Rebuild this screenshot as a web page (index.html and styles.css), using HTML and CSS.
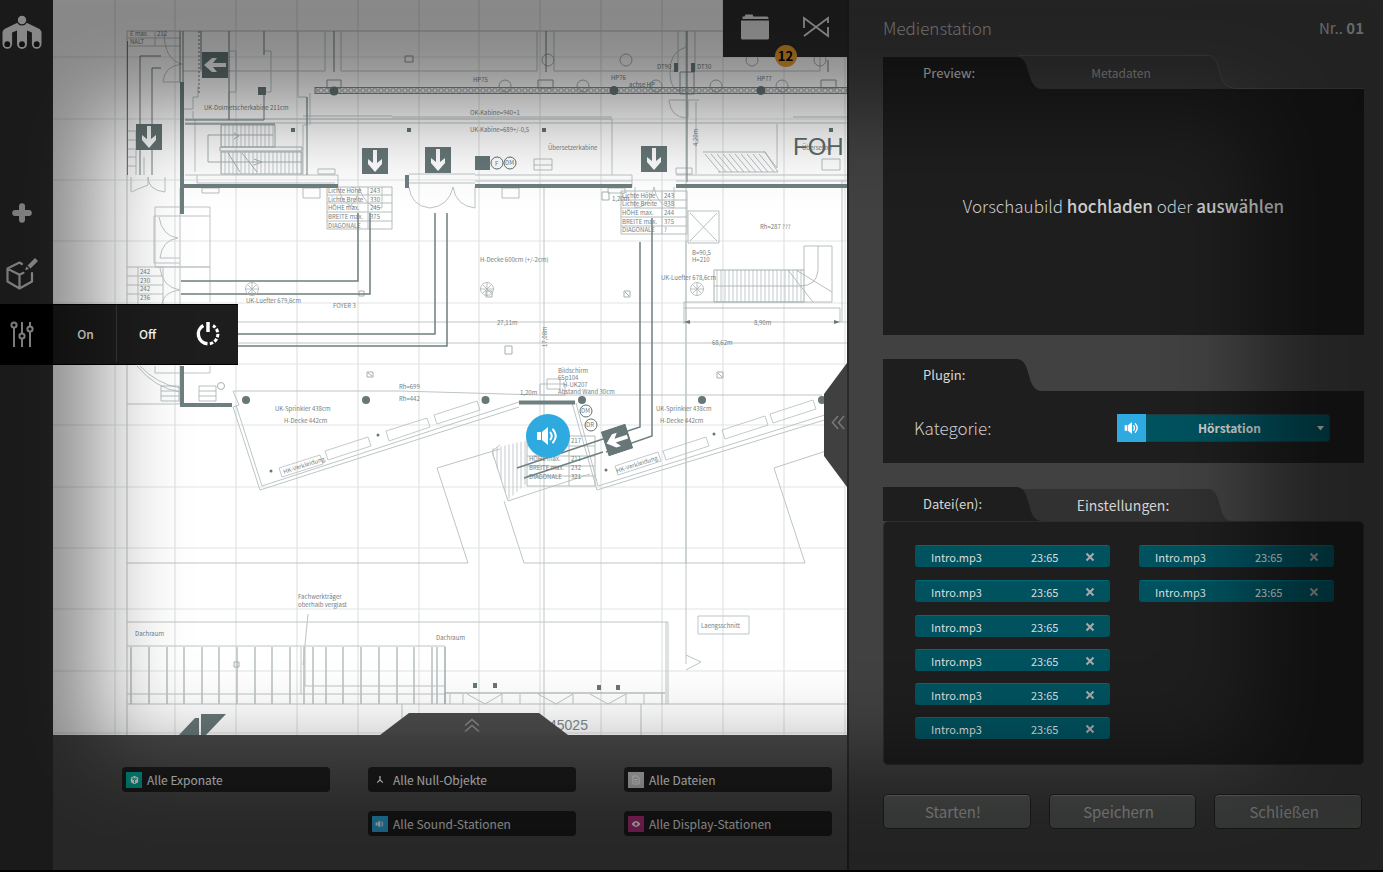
FILE: index.html
```html
<!DOCTYPE html>
<html lang="de">
<head>
<meta charset="utf-8">
<title>Medienstation</title>
<link rel="stylesheet" href="styles.css">
</head>
<body>
<svg class="defs" width="0" height="0" aria-hidden="true">
  <defs>
    <symbol id="speaker" viewBox="0 0 24 20">
      <path d="M1 6h4v8H1zM6 6l6-5v18l-6-5z" fill="currentColor"/>
      <path d="M14.500 6.500q2.500 3.500 0 7M17 3.500q5.500 6.500 0 13" fill="none" stroke="currentColor" stroke-width="2" stroke-linecap="round"/>
    </symbol>
    <symbol id="arrow-sign" viewBox="0 0 26 26">
      <path d="M0 0h26v26H0z" fill="#677777"/>
      <path d="M11 2h4v13l5-4v5l-7 8-7-8v-5l5 4z" fill="#fff"/>
    </symbol>
    <symbol id="fan" viewBox="0 0 14 14">
      <path d="M7 .5a6.500 6.500 0 1 0 .01 0M7 0v14M0 7h14M2.500 2.500l9 9M11.500 2.500l-9 9" fill="none" stroke="#a9b2b2" stroke-width=".8"/>
    </symbol>
    <symbol id="cross" viewBox="0 0 10 10"><path d="M1.500 1.500l7 7M8.500 1.500l-7 7" stroke="currentColor" stroke-width="2"/></symbol>
    <pattern id="truss" width="6" height="6" patternUnits="userSpaceOnUse" y="87.500"><circle cx="3" cy="3" r="2.300" fill="none" stroke="#7f8b8b" stroke-width=".9"/></pattern>
    <pattern id="hatch" width="4" height="6" patternUnits="userSpaceOnUse"><path d="M1 0v6" stroke="#b4bcbc" stroke-width=".8"/></pattern>
  </defs>
</svg>

<div class="app">
  <nav class="rail" aria-label="Werkzeuge">
    <a class="rail-logo" href="#" aria-label="Start">
      <svg width="40" height="35" viewBox="0 0 40 35"><path d="M20 5.500L3.500 13.500Q.5 15 .5 18V29a4.800 4.800 0 0 0 9.600 0V17.500l4.900-2V29a5 5 0 0 0 10 0V15.500l4.900 2V29a4.800 4.800 0 0 0 9.600 0V18q0-3-3-4.500z" fill="currentColor"/><circle cx="20" cy="5" r="4.900" fill="currentColor" stroke="#313131" stroke-width="1.300"/><g fill="#222"><circle cx="5.300" cy="29.200" r="2.900"/><circle cx="20" cy="29.200" r="2.900"/><circle cx="34.700" cy="29.200" r="2.900"/></g></svg>
    </a>
    <button class="rail-button" type="button" aria-label="Hinzufügen"><svg width="20" height="20" viewBox="0 0 20 20"><path d="M10 3.200v13.600M3.200 10h13.600" stroke="currentColor" stroke-width="6" stroke-linecap="round"/></svg></button>
    <button class="rail-button" type="button" aria-label="Objekt bearbeiten"><svg width="34" height="36" viewBox="0 0 34 36" fill="none" stroke="currentColor" stroke-width="2.200" stroke-linejoin="round" stroke-linecap="round"><path d="M17 8L14.500 6.500 2.500 12.500v13L14.500 32.500l12.500-7V17M3 13L14.500 18.800V32M14.500 18.800l4-2"/><path d="M22.500 9.500L30 2l3 3-7.500 7.500zM21.500 10.500l-1.500 3.800 4-1.300z" fill="currentColor" stroke="none"/></svg></button>
    <div class="rail-group">
      <button class="rail-button rail-button-active" type="button" aria-label="Regler"><svg width="24" height="28" viewBox="0 0 24 28" fill="none" stroke="currentColor" stroke-width="2"><circle cx="4" cy="4" r="2.600"/><circle cx="12" cy="15" r="2.600"/><circle cx="20" cy="8" r="2.600"/><path d="M4 6.600V26M12 1v11.400M12 17.600V26M20 1v4.400M20 10.600V26"/></svg></button>
      <div class="flyout">
        <button type="button">On</button>
        <button type="button">Off</button>
        <button type="button" aria-label="Neustart"><svg width="26" height="26" viewBox="0 0 26 26" fill="none" stroke="currentColor" stroke-width="3"><path d="M13 1v10" stroke-width="3.500"/><path d="M8.300 4.500A9.800 9.800 0 0 0 12.500 22.800" stroke-width="3.400"/><path d="M14.800 22.700A9.800 9.800 0 0 0 18 4.600" stroke-dasharray="3.500 1.600"/></svg></button>
      </div>
    </div>
  </nav>

  <main class="stage">
    <section class="map" aria-label="Grundriss">
      <svg class="plan" viewBox="53 0 794 735" preserveAspectRatio="xMinYMin slice">
        <path d="M53 57H847M53 119H847M53 180H847M53 241H847M53 303H847M53 364H847M53 425H847M53 487H847M53 548H847M53 609H847M53 671H847M53 733H847M115 0V735M175 0V735M236 0V735M297 0V735M358 0V735M419 0V735M479 0V735M540 0V735M601 0V735M662 0V735M723 0V735M784 0V735M845 0V735" stroke="#e2e4e4" stroke-width="1.200"/>
        <g fill="none" stroke="#bdc5c5" stroke-width="1">
          <path d="M127 31H847M127 31V735M127 38H180M127 46H180M155 31V46M183 71H325V31M341 31V71H537V31M554 31V71H678V31M695 31V71H820V31M298 31V97H307V125H303V175M310 93V125M230 51H236V92H229V120M264 51H271V92H264M127 131H136V175M127 140H136M127 149H136M127 157H136M127 166H136M144 157V175"/>
          <path d="M185 119H612V175M185 123H847M392 117H612M303 116H392M185 175H338V187M197 175V183H335M195 125V172M195 119V125M193 111V119M193 97V109H183M198 86V97H193M475 175H632V187M475 181H632M409 174H475M409 183H475M676 175H847M676 181H847M793 117H847M777 124V168L764 151M699 100H688V118M696 102V174"/>
          <path d="M164 31Q164 60 182 64Q164 66 163 82H180M131 192V177M148 177V185Q135 190 132 192M148 177Q148 190 165 192V177M338 187Q342 205 355 207M359 187Q365 208 382 208V187M360 187Q356 206 346 207M409 187Q411 206 430 208Q449 206 453 187Q456 206 475 208V187M654 187Q650 207 635 208V187M654 187Q657 207 674 208V187M686 47Q669 52 670 73T684 90M686 100H669V101Q671 117 686 118"/>
          <path d="M155 207H210V267H155V207M154 216H210M154 216V263H180M159 217Q162 236 178 238Q162 240 160 258H180M155 267H210V302M127 267H163V304M127 276H163M127 285H163M127 294H163M138 267V304M160 268Q162 287 180 290Q163 292 162 304M137 366Q155 388 180 392M140 366Q157 384 180 388M155 366V373H210V366M180 188V404M127 404H180"/>
          <path d="M233 407L260 490L519 407M236 405L262 486L519 402M233 391H400L540 395H822M233 391L239 405L233 407M238 322H847M238 343H847M544 188V735M686 31V564M686 240V664M842 180V322M127 563H468L437 468L500 449M572 403L597 490L847 413M576 403L598 486L847 408M500 445L492 451L508 501L590 474M504 501L524 563H805L774 468L826 451"/>
          <path d="M127 622H668V704M666 622V704M127 646H445V704M127 694H445V704M127 704H847M301 647V694M305 647V686H445M308 614L303 665M402 704V735M641 704V735M698 616H749V634H698ZM686 655L701 662L686 670"/>
          <path d="M131 647V704M149 647V704M167 647V704M184 647V704M202 647V704M219 647V704M237 647V704M255 647V704M272 647V704M290 647V704M304 647V704M313 647V704M326 647V704M343 647V704M361 647V704M379 647V704M397 647V704M414 647V704M432 647V704M437 647V704" stroke="#bcc4c4" stroke-width="1.600"/>
          <path d="M450 694V704M463 694V704M467 694L485 704L502 694V704M520 694V704M538 694L556 704L573 694V704M590 694L608 704L626 694V704M644 694V704M662 694V704"/>
        </g>
        <g fill="url(#hatch)" stroke="#a5afaf">
          <path d="M221 125H275V147H221ZM221 152H302V174H221Z"/>
          <path d="M714 270H804V302H714Z"/>
          <path d="M490 449L528 440V482L508 500Z" stroke="none"/>
        </g>
        <g fill="none" stroke="#a5afaf">
          <path d="M220 147H302V151H220ZM208 135H273M208 135V162H302M228 153L240 172M242 153L257 172M234 133L239 136L234 139M254 159L262 162L254 165"/>
          <path d="M684 302H832V246H804V270M818 246V270Q817 286 800 286H714M788 270L813 302M796 270L832 292M684 308H840V322M684 308V324M684 302V308M688 211H719V243H688ZM690 213L717 241M717 213L690 241M703 152H765L778 172H718M705 154L720 172M711 154L726 172M717 154L732 172M723 154L738 172M729 154L744 172M735 154L750 172M741 154L756 172M747 154L762 172M753 154L768 172M759 154L774 172" stroke-width=".8"/>
          <path d="M327 187H392V229H327ZM327 195H392M327 203H392M327 212H392M327 221H392M368 187V229M621 191H687V234H621ZM621 200H687M621 208H687M621 217H687M621 226H687M662 191V234M527 436H595V486H527ZM527 446H595M527 456H595M527 466H595M527 476H595M569 436V486" stroke="#b4bcbc"/>
          <path d="M279 468L320 455L323 464L282 477ZM325 451L368 437L371 446L328 460ZM386 431L427 418L430 427L389 441ZM434 415L477 401L480 410L437 424ZM615 466L658 452L661 461L618 475ZM663 451L706 437L709 446L666 460ZM722 430L765 416L768 425L725 439ZM770 414L813 400L816 409L773 423Z" stroke="#b4bcbc" stroke-width=".8"/>
          <path d="M202 188H219V193H202ZM303 188H320V198H303ZM318 169H335V174H318ZM502 188H519V198H502ZM534 159H552V170H534ZM534 165H552M822 159H840V170H822ZM676 168H692V174H676ZM608 188H625V193H608ZM161 386H179V401H161ZM161 391H179M161 396H179M199 386H216V401H199ZM199 391H216M199 396H216M540 384H565V395H540ZM547 379H560V389H547Z" stroke-width=".8"/>
          <path d="M327 80H341V88H327ZM405 56H413V62H405ZM538 80H553V88H538ZM821 80H836V88H821ZM680 72H694V94H680Z" stroke="#8f9a9a"/>
          <circle cx="626" cy="60" r="6"/><circle cx="548" cy="60" r="6"/><circle cx="505" cy="86" r="6"/><circle cx="583" cy="86" r="6"/><circle cx="656" cy="86" r="6"/><circle cx="716" cy="86" r="6"/><circle cx="782" cy="86" r="6"/><circle cx="752" cy="60" r="6"/><circle cx="820" cy="60" r="6"/>
          <path d="M367 372h6v5h-6zM368 373l4 3M624 291h6v6h-6zM625 292l4 4M505 346h7v8h-7zM717 372h6v6h-6zM718 373l4 4M234 662h5v5h-5zM359 291h5v5h-5zM486 291h6v6h-6zM602 192h7v8h-7z"/>
          <circle cx="221" cy="386" r="3.500"/>
        </g>
        <rect x="315" y="87.500" width="532" height="6" fill="url(#truss)" stroke="#7f8b8b"/>
        <g stroke="#6f7f7f" fill="none">
          <path d="M127.500 41V175M180 31V82M183 31V82M140 175V56H161M152 175V68H161M201 31V70M229 31V120M264 31V55M264 92V120M185 120H264M334 31V72M546 31V72M687 31V182M828 60V72M185 124H275M307 97V175" stroke-width="1"/>
          <path d="M199 31V95" stroke-dasharray="2 2"/>
          <path d="M358 213V281H181M370 213V294H181M435 213V334H238M447 213V346H238M640 242V427L600 440M652 218V436L606 452M517 468L600 440M524 478L603 452" stroke-width="1.500"/>
          <path d="M182 82V214M182 366V405" stroke-width="4"/><path d="M180 405H232" stroke-width="4"/>
          <path d="M184 186H338M475 186H632M676 186H847M519 402.500H575" stroke-width="4"/>
          <path d="M407 175V188M676 63V72M693 63V72" stroke-width="4"/>
          <path d="M445 647V704M445 693H665" stroke="#96a2a2"/>
        </g>
        <g fill="#677777">
          <circle cx="334" cy="91" r="4.500"/><circle cx="614" cy="90.500" r="4.500"/><circle cx="761" cy="90.500" r="4.500"/><circle cx="246" cy="400" r="4"/><circle cx="366" cy="400" r="4"/><circle cx="485.500" cy="400" r="4"/><circle cx="582" cy="400" r="4"/><circle cx="702" cy="400" r="4"/><circle cx="822" cy="400" r="4"/>
          <circle cx="271" cy="471" r="1.500"/><circle cx="378" cy="435" r="1.500"/><circle cx="606" cy="470" r="1.500"/><circle cx="714" cy="434" r="1.500"/>
          <path d="M258 87h8v8h-8zM475 156h15v14h-15zM473 683h4v5h-4zM493 683h4v5h-4zM597 685h4v5h-4zM616 685h4v5h-4zM291 128h4v4h-4zM407 128h4v4h-4zM542 128h4v4h-4zM829 128h4v4h-4zM179 735L195 718H199V735ZM201 714H226L206 735H201ZM684 322l6-2v4zM840 322l-6-2v4z"/>
        </g>
        <use href="#arrow-sign" x="202" y="52" width="26" height="26" transform="rotate(90 215 65)"/>
        <use href="#arrow-sign" x="136" y="124" width="26" height="26"/>
        <use href="#arrow-sign" x="362" y="148" width="26" height="26"/>
        <use href="#arrow-sign" x="425" y="147" width="26" height="26"/>
        <use href="#arrow-sign" x="641" y="146" width="26" height="26"/>
        <use href="#arrow-sign" x="604" y="427" width="26" height="26" transform="rotate(72 617 440)"/>
        <use href="#fan" x="245" y="282" width="14" height="14"/><use href="#fan" x="480" y="282" width="14" height="14"/><use href="#fan" x="690" y="282" width="14" height="14"/>
        <g fill="#fff" fill-opacity=".6" stroke="#5f7070"><circle cx="497" cy="163" r="6"/><circle cx="510" cy="163" r="6"/><circle cx="586" cy="411" r="6"/><circle cx="591" cy="425" r="6"/></g>
        <g class="plan-text">
          <text x="130" y="36">E max.</text><text x="157" y="36">212</text><text x="130" y="44">NALT</text>
          <text x="204" y="110">UK-Dolmetscherkabine 211cm</text><text x="470" y="115">OK-Kabine=940+1</text><text x="470" y="132">UK-Kabine=689+/-0,5</text>
          <text x="548" y="150">Übersetzerkabine</text><text x="802" y="150">Übersetzer</text><text x="473" y="82">HP75</text><text x="611" y="80">HP76</text><text x="757" y="81">HP77</text><text x="629" y="87">achse HP</text><text x="657" y="69">DT90</text><text x="697" y="69">DT30</text>
          <text x="495" y="166">F</text><text x="505" y="165">DM</text><text x="581" y="413">DM</text><text x="586" y="427">DR</text>
          <text x="328" y="193">Lichte Höhe</text><text x="328" y="202">Lichte Breite</text><text x="328" y="210">HÖHE max.</text><text x="328" y="219">BREITE max.</text><text x="328" y="228">DIAGONALE</text><text x="370" y="193">243</text><text x="370" y="202">330</text><text x="370" y="210">245</text><text x="370" y="219">375</text>
          <text x="622" y="198">Lichte Höhe</text><text x="622" y="206">Lichte Breite</text><text x="622" y="215">HÖHE max.</text><text x="622" y="224">BREITE max.</text><text x="622" y="232">DIAGONALE</text><text x="664" y="198">243</text><text x="664" y="206">938</text><text x="664" y="215">244</text><text x="664" y="224">375</text><text x="664" y="232">?</text>
          <text x="612" y="201">1,20m</text><text x="760" y="229">Rh=287 ???</text><text x="480" y="262">H-Decke 600cm (+/-2cm)</text><text x="692" y="255">B=90,5</text><text x="692" y="262">H=210</text><text x="661" y="280">UK-Luefter 678,6cm</text>
          <text x="246" y="303">UK-Luefter 679,6cm</text><text x="333" y="308">FOYER 3</text><text x="497" y="325">27,11m</text><text x="754" y="325">8,90m</text><text x="712" y="345">68,62m</text><text x="547" y="347" transform="rotate(-90 547 347)">17,08m</text><text x="698" y="146" transform="rotate(-90 698 146)">4,20m</text>
          <text x="140" y="274">242</text><text x="140" y="283">230</text><text x="140" y="291">242</text><text x="140" y="300">236</text>
          <text x="399" y="389">Rh=699</text><text x="399" y="401">Rh=442</text><text x="275" y="411">UK-Sprinkler 438cm</text><text x="284" y="423">H-Decke 442cm</text><text x="656" y="411">UK-Sprinkler 438cm</text><text x="660" y="423">H-Decke 442cm</text>
          <text x="558" y="373">Bildschirm</text><text x="558" y="380">65p104</text><text x="563" y="387">H-UK207</text><text x="558" y="394">Abstand Wand 30cm</text><text x="520" y="395">1,20m</text>
          <text x="284" y="474" transform="rotate(-18 284 474)">HK-Verkleidung</text><text x="617" y="473" transform="rotate(-18 617 473)">HK-Verkleidung</text>
          <text x="529" y="461">HÖHE max.</text><text x="529" y="470">BREITE max.</text><text x="529" y="479">DIAGONALE</text><text x="571" y="443">217</text><text x="571" y="461">211</text><text x="571" y="470">232</text><text x="571" y="479">321</text>
          <text x="298" y="599">Fachwerkträger</text><text x="298" y="607">oberhalb verglast</text><text x="135" y="636">Dachraum</text><text x="436" y="640">Dachraum</text><text x="701" y="628">Laengsschnitt</text>
        </g>
        <text class="plan-foh" x="793" y="155">FOH</text>
        <text class="plan-number" x="549" y="730">45025</text>
      </svg>
      <button class="pin" type="button" aria-label="Sound-Station"><svg width="24" height="20"><use href="#speaker"/></svg></button>
      <div class="map-tools">
        <button type="button" aria-label="Ordner, 12 neue"><svg width="30" height="26" viewBox="0 0 30 26"><path d="M2.500 5V2.500h2L5.500.5h7l1 2H27q1.500 0 1.500 2V5zM1 6.500h28V24q0 1.500-1.500 1.500h-25Q1 25.500 1 24z" fill="currentColor"/></svg><span class="badge">12</span></button>
        <button type="button" aria-label="Verbindungen"><svg width="28" height="22" viewBox="0 0 28 22" fill="none" stroke="currentColor" stroke-width="1.800"><path d="M2 12V2l24 18V11M2 20L26 2V7M2 20"/></svg></button>
      </div>
      <button class="handle-right" type="button" aria-label="Panel öffnen"><svg width="14" height="15" viewBox="0 0 14 15" fill="none" stroke="currentColor" stroke-width="1.600"><path d="M7 1L1.500 7.500 7 14M13 1L7.500 7.500 13 14"/></svg></button>
      <button class="handle-bottom" type="button" aria-label="Leiste öffnen"><svg width="16" height="15" viewBox="0 0 16 15" fill="none" stroke="currentColor" stroke-width="1.600"><path d="M1 7.500L8 1.500l7 6M1 13.500l7-6 7 6"/></svg></button>
    </section>

    <section class="drawer" aria-label="Filter">
      <button class="filter" type="button"><span class="filter-icon icon-teal"><svg width="9" height="10" viewBox="0 0 11 11"><path d="M5.500.3L10 2.800v5.400l-4.500 2.500L1 8.200V2.800z" fill="currentColor"/><path d="M2.300 3.700l3.200 1.800 3.200-1.800M5.500 5.500v3.700M3.500 2.800l2 1 2-1" stroke="#008577" fill="none"/></svg></span>Alle Exponate</button>
      <button class="filter" type="button"><span class="filter-icon"><svg width="8" height="9" viewBox="0 0 10 11"><path d="M5 1v5L1.500 9.500M5 6l3.500 3.500" stroke="currentColor" stroke-width="1.500" fill="none"/></svg></span>Alle Null-Objekte</button>
      <button class="filter" type="button"><span class="filter-icon icon-grey"><svg width="8" height="10" viewBox="0 0 9 11" fill="none" stroke="currentColor"><path d="M1 1h4.500L8 3.500V10H1zM2.500 5h4M2.500 7.500h4"/></svg></span>Alle Dateien</button>
      <button class="filter filter-second" type="button"><span class="filter-icon icon-blue"><svg width="10" height="8"><use href="#speaker"/></svg></span>Alle Sound-Stationen</button>
      <button class="filter" type="button"><span class="filter-icon icon-pink"><svg width="10" height="8" viewBox="0 0 11 9"><path d="M.5 4.500Q5.500-2.500 10.500 4.500 5.500 11.500.5 4.500z" fill="currentColor"/><circle cx="5.500" cy="4.500" r="1.700" fill="#b5307c"/></svg></span>Alle Display-Stationen</button>
    </section>
  </main>

  <aside class="panel">
    <header class="panel-head"><h1>Medienstation</h1><p>Nr.. <b>01</b></p></header>

    <section class="group">
      <div class="tabs tabs-lined">
        <button class="tab" type="button"><svg class="tab-shape" viewBox="0 0 158 32" preserveAspectRatio="none"><path d="M0 0H133C143 0 144 11 146 16C148 26 152 32 159 32H0Z" fill="#1e1e1e"/></svg><span>Preview:</span></button>
        <button class="tab tab-back tab-tall" type="button"><svg class="tab-shape" viewBox="0 0 218 34" preserveAspectRatio="none"><path d="M0 1H190C199 1 200 12 202 18C204 28 209 33 217 34H0Z" fill="#3d3d3d"/><path d="M0 .5H190C199 .5 200 12 202 18C204 28 209 33 218 33.500" fill="none" stroke="#555"/></svg><span>Metadaten</span></button>
      </div>
      <div class="box preview"><p>Vorschaubild <a href="#">hochladen</a> oder <a href="#">auswählen</a></p></div>
    </section>

    <section class="group">
      <div class="tabs"><button class="tab" type="button"><svg class="tab-shape" viewBox="0 0 158 32" preserveAspectRatio="none"><path d="M0 0H133C143 0 144 11 146 16C148 26 152 32 159 32H0Z" fill="#1e1e1e"/></svg><span>Plugin:</span></button></div>
      <div class="box plugin">
        <label for="kategorie">Kategorie:</label>
        <div class="category">
          <span class="category-icon"><svg width="16" height="14"><use href="#speaker"/></svg></span>
          <select id="kategorie"><option>Hörstation</option></select>
          <svg class="category-arrow" width="7" height="5" viewBox="0 0 7 5"><path d="M0 0h7L3.500 4.500z" fill="currentColor"/></svg>
        </div>
      </div>
    </section>

    <section class="group">
      <div class="tabs">
        <button class="tab tab-tall" type="button"><svg class="tab-shape" viewBox="0 0 158 34" preserveAspectRatio="none"><path d="M0 0H133C143 0 144 12 146 17C148 28 152 34 159 34H0Z" fill="#1e1e1e"/></svg><span>Datei(en):</span></button>
        <button class="tab tab-back tab-bright" type="button"><svg class="tab-shape" viewBox="0 0 218 32" preserveAspectRatio="none"><path d="M0 0H190C199 0 200 11 202 16C204 26 207 32 214 32H0Z" fill="#313131"/></svg><span>Einstellungen:</span></button>
      </div>
      <div class="box files">
        <ul>
          <li><span>Intro.mp3</span><time>23:65</time><button type="button" aria-label="Entfernen"><svg width="10" height="10"><use href="#cross"/></svg></button></li>
          <li><span>Intro.mp3</span><time>23:65</time><button type="button" aria-label="Entfernen"><svg width="10" height="10"><use href="#cross"/></svg></button></li>
          <li><span>Intro.mp3</span><time>23:65</time><button type="button" aria-label="Entfernen"><svg width="10" height="10"><use href="#cross"/></svg></button></li>
          <li><span>Intro.mp3</span><time>23:65</time><button type="button" aria-label="Entfernen"><svg width="10" height="10"><use href="#cross"/></svg></button></li>
          <li><span>Intro.mp3</span><time>23:65</time><button type="button" aria-label="Entfernen"><svg width="10" height="10"><use href="#cross"/></svg></button></li>
          <li><span>Intro.mp3</span><time>23:65</time><button type="button" aria-label="Entfernen"><svg width="10" height="10"><use href="#cross"/></svg></button></li>
        </ul>
        <ul>
          <li><span>Intro.mp3</span><time>23:65</time><button type="button" aria-label="Entfernen"><svg width="10" height="10"><use href="#cross"/></svg></button></li>
          <li><span>Intro.mp3</span><time>23:65</time><button type="button" aria-label="Entfernen"><svg width="10" height="10"><use href="#cross"/></svg></button></li>
        </ul>
      </div>
    </section>

    <footer class="actions"><button type="button">Starten!</button><button type="button">Speichern</button><button type="button">Schließen</button></footer>
  </aside>
</div>
</body>
</html>
```

FILE: styles.css
```css
* { box-sizing: border-box; }

body {
  margin: 0;
  background: #000;
  color: #ccc;
  font: 14px/20px "Noto Sans CJK SC", "Noto Sans", sans-serif;
}

h1, p, ul { margin: 0; padding: 0; font-weight: inherit; }
ul { list-style: none; }
svg { display: block; flex: none; }
button { margin: 0; padding: 0; border: 0; background: none; color: inherit; font: inherit; cursor: pointer; }
a { color: inherit; text-decoration: none; }
.defs { position: absolute; }

.app {
  position: relative;
  display: grid;
  grid-template-columns: 53px minmax(0, 1fr) 536px;
  min-height: 100vh;
  border-bottom: 2px solid #000;
}

/* edge shading over the whole screen */
.app::after {
  content: "";
  position: absolute;
  inset: 0;
  z-index: 10;
  pointer-events: none;
  box-shadow: inset -15px 0 88px 112px rgba(0, 0, 0, .47);
}

/* left rail */
.rail { background: #313131; color: #e4e4e4; }
.rail-logo { display: block; height: 182px; padding: 15px 2px; color: #fff; }
.rail-button { display: grid; place-items: center; width: 44px; height: 61px; }
.rail-group { position: relative; }
.rail-button-active { width: 53px; padding-right: 9px; background: #000; }

.flyout {
  position: absolute;
  top: 0;
  left: 53px;
  z-index: 3;
  display: grid;
  grid-template-columns: 62px 61px 60px;
  width: 185px;
  height: 61px;
  padding: 0 0 2px 2px;
  border: solid #000;
  border-width: 1px 0;
  background: #1d1d1d;
  color: #fff;
  font-size: 12px;
  font-weight: 500;
}
.flyout button { display: grid; place-items: center; }
.flyout button:first-child { border-right: 1px solid #3a3a3a; }

/* plan */
.stage { display: grid; grid-template-rows: 1fr auto; min-width: 0; }
.map { position: relative; min-height: 600px; background: #fff; }
.plan { position: absolute; inset: 0; width: 100%; height: 100%; }
.plan-text { font-size: 6px; fill: #74807f; }
.plan-foh { font: 24px "Liberation Sans", sans-serif; fill: #5f6b6b; }
.plan-number { font: 14px "Liberation Sans", sans-serif; fill: #7f8b8b; }

.pin {
  position: absolute;
  top: 414px;
  left: 473px;
  display: grid;
  place-items: center;
  width: 44px;
  height: 44px;
  border-radius: 50%;
  background: #2eaae1;
  color: #fff;
}

.map-tools {
  position: absolute;
  top: 0;
  right: 0;
  display: grid;
  grid-template-columns: 1fr 1fr;
  width: 124px;
  height: 57px;
  padding: 0 1px 4px 2px;
  background: #2e2e2e;
  color: #eee;
}
.map-tools button { position: relative; display: grid; place-items: center; }
.badge {
  position: absolute;
  top: 45px;
  right: -11px;
  width: 22px;
  height: 22px;
  border-radius: 50%;
  background: #efa02d;
  color: #000;
  font-size: 13px;
  font-weight: 700;
  line-height: 22px;
}

.handle-right {
  position: absolute;
  top: 363px;
  right: 0;
  display: grid;
  place-items: center;
  width: 23px;
  height: 124px;
  padding: 0 0 6px 5px;
  background: #404040;
  clip-path: polygon(100% 0, 0 25%, 0 75%, 100% 100%);
  color: #777;
}
.handle-bottom {
  position: absolute;
  bottom: 0;
  left: 327px;
  display: grid;
  place-items: center;
  width: 188px;
  height: 22px;
  padding: 3px 5px 0 0;
  background: #4c4c4c;
  clip-path: polygon(29px 0, 159px 0, 100% 100%, 0 100%);
  color: #888;
}

/* bottom drawer */
.drawer {
  display: grid;
  grid-template-columns: 246fr 256fr 208fr;
  row-gap: 19px;
  align-content: start;
  min-height: 135px;
  padding: 32px 15px 32px 69px;
  background: #4a4a4a;
}
.filter {
  display: flex;
  align-items: center;
  gap: 5px;
  width: 208px;
  height: 25px;
  padding: 0 4px;
  border-radius: 4px;
  background: #1d1d1d;
  color: #e6e6e6;
  font-size: 12px;
}
.filter-second { grid-column: 2; }
.filter-icon { display: grid; place-items: center; width: 16px; height: 16px; color: #fff; }
.icon-teal { background: #00a896; }
.icon-grey { background: #bbb; color: #eee; }
.icon-blue { background: #2eaae1; }
.icon-pink { background: #b5307c; }

/* right panel */
.panel {
  display: flex;
  flex-direction: column;
  padding: 0 19px 40px 34px;
  border-left: 2px solid #2a2a2a;
  background: #414141;
}
.panel-head { display: flex; justify-content: space-between; height: 55px; padding-top: 18px; color: #c4c4c4; }
.panel-head h1 { font-size: 17px; font-weight: 300; }
.panel-head p { font-size: 15px; }

.group { margin-bottom: 24px; }
.tabs { display: flex; align-items: flex-end; }
.tabs-lined { background: linear-gradient(#555, #555) 100% 100% / 128px 1px no-repeat; }
.tab { position: relative; z-index: 1; width: 158px; height: 32px; color: #d8d8d8; font-size: 13px; text-align: left; }
.tab span { position: relative; display: block; padding-left: 40px; }
.tab-shape { position: absolute; inset: 0; width: 100%; height: 100%; }
.tab-tall { height: 34px; }
.tab-back { z-index: 0; width: 218px; margin-left: -23px; color: #9a9a9a; font-size: 12px; text-align: center; }
.tab-back span { padding: 2px 12px 0 0; }
.tab-bright { color: #d4d4d4; font-size: 14px; }
.tab-bright span { padding: 0 8px 0 0; }

.box { background: #1e1e1e; }
.preview { display: grid; place-items: center; min-height: 246px; padding-bottom: 13px; font-size: 17px; }
.preview p { font-weight: 300; }
.preview a { font-weight: 500; }

.plugin { display: flex; align-items: center; justify-content: space-between; min-height: 72px; padding: 2px 34px 0 31px; }
.plugin label { font-size: 17px; font-weight: 300; }
.category { position: relative; display: flex; width: 213px; height: 28px; }
.category-icon { display: grid; place-items: center; width: 29px; background: #2eaae1; color: #fff; }
.category select {
  flex: 1;
  margin: 0;
  padding: 0 16px 0 0;
  appearance: none;
  border: 1px solid #1f3b40;
  border-left: 0;
  border-radius: 0 4px 4px 0;
  background: #00525f;
  color: #d0d0d0;
  font: 700 12px/20px "Noto Sans CJK SC", "Noto Sans", sans-serif;
  text-align-last: center;
}
.category-arrow { position: absolute; top: 12px; right: 6px; color: #ddd; pointer-events: none; }

.files {
  display: grid;
  grid-template-columns: 1fr 1fr;
  column-gap: 29px;
  min-height: 244px;
  padding: 23px 29px 24px 31px;
  border: 1px solid #28302f;
  border-radius: 5px;
}
.files ul { display: grid; grid-template-rows: 23px 23px; grid-auto-rows: 22px; row-gap: 12px; align-content: start; }
.files li {
  display: grid;
  grid-template-columns: 1fr 39px 40px;
  align-items: center;
  height: 22px;
  padding-left: 16px;
  border-top: 1px solid #006a78;
  border-radius: 3px;
  background: #00525f;
  color: #dcdcdc;
  font-size: 11px;
}
.files li button { display: grid; place-items: center; color: #aaa; }

.actions { display: grid; grid-template-columns: repeat(3, 1fr); gap: 18px; padding-top: 5px; padding-right: 2px; }
.actions button {
  height: 35px;
  padding-right: 8px;
  border: 1px solid #252828;
  border-radius: 5px;
  background: linear-gradient(#5c5e5d, #5e625f);
  box-shadow: inset 0 1px 0 #808080;
  color: #bbb;
  font-size: 15px;
}
```
